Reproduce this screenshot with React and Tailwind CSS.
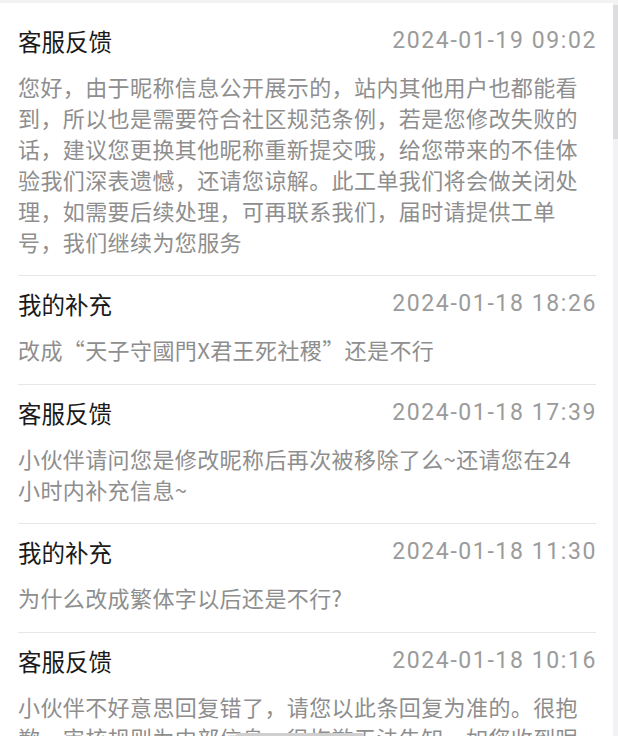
import React from 'react';

const records = [
  {
    title: '客服反馈',
    time: '2024-01-19 09:02',
    body: '您好，由于昵称信息公开展示的，站内其他用户也都能看到，所以也是需要符合社区规范条例，若是您修改失败的话，建议您更换其他昵称重新提交哦，给您带来的不佳体验我们深表遗憾，还请您谅解。此工单我们将会做关闭处理，如需要后续处理，可再联系我们，届时请提供工单号，我们继续为您服务',
  },
  {
    title: '我的补充',
    time: '2024-01-18 18:26',
    body: '改成“天子守國門X君王死社稷”还是不行',
  },
  {
    title: '客服反馈',
    time: '2024-01-18 17:39',
    body: '小伙伴请问您是修改昵称后再次被移除了么~还请您在24小时内补充信息~',
  },
  {
    title: '我的补充',
    time: '2024-01-18 11:30',
    body: '为什么改成繁体字以后还是不行?',
  },
  {
    title: '客服反馈',
    time: '2024-01-18 10:16',
    body: '小伙伴不好意思回复错了，请您以此条回复为准的。很抱歉，审核规则为内部信息，很抱歉无法告知，如您收到昵称被重置的通知，还请您重新修改昵称',
  },
];

const cjk = "font-['Noto_Sans_CJK_SC','Noto_Sans',sans-serif]";

const Record = ({ item, first }) => (
  <div className={first ? 'pt-[22px] pb-[18px]' : 'border-t border-[#e6e6e6] pt-[12px] pb-[18.6px]'}>
    <div className="flex items-center justify-between h-[32px]">
      <span className={`${cjk} text-[23.5px] leading-[32px] text-[#1a1a1a]`}>{item.title}</span>
      <span className="font-['Roboto',sans-serif] text-[23px] leading-[32px] tracking-[1.6px] text-[#9b9b9b] mr-[-1px]">
        {item.time}
      </span>
    </div>
    <p className={`${cjk} mt-[14px] mr-[9px] text-[22px] tracking-[0.4px] leading-[31px] text-[#8e8e8e]`}>
      {item.body}
    </p>
  </div>
);

export default function App() {
  return (
    <div className="relative w-[618px] h-[736px] overflow-hidden bg-white flex flex-col">
      <div className="h-[3px] bg-[#f2f2f2] shrink-0" />
      <div className="flex flex-1 min-h-0">
        <div className="flex-1 pl-[18px] pr-[17px] overflow-hidden">
          {records.map((item, i) => (
            <Record key={i} item={item} first={i === 0} />
          ))}
        </div>
        <div className="w-[5px] bg-[#f2f2f4] shrink-0">
          <div className="mt-[2px] h-[134px] bg-[#dddde0]" />
        </div>
      </div>
      <div className="absolute bottom-0 left-[236px] w-[128px] h-[3px] rounded-t-full bg-[#cfcfcf]" />
    </div>
  );
}
